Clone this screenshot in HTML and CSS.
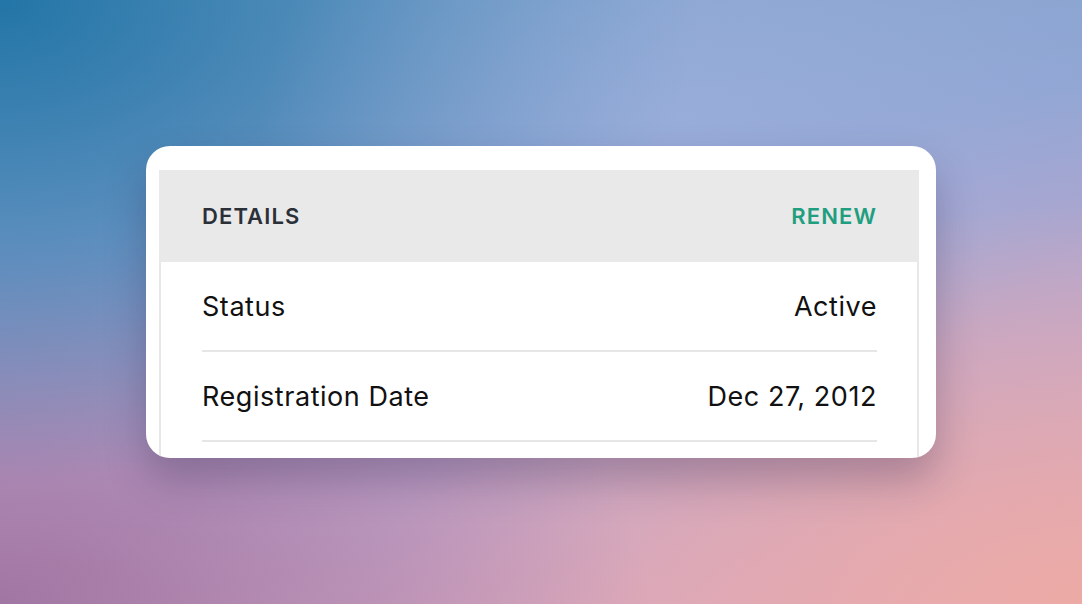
FILE: index.html
```html
<!DOCTYPE html>
<html>
<head>
<meta charset="utf-8">
<link rel="stylesheet" href="styles.css">
</head>
<body>
<div class="stage">
  <div class="card">
    <div class="panel">
      <div class="head">
        <span class="title">DETAILS</span>
        <span class="action">RENEW</span>
      </div>
      <div class="body">
        <div class="row"><span>Status</span><span>Active</span></div>
        <div class="row"><span>Registration Date</span><span>Dec 27, 2012</span></div>
        <div class="row row-empty"></div>
      </div>
    </div>
  </div>
</div>
</body>
</html>
```
FILE: styles.css
```css
html, body { margin: 0; padding: 0; }
body {
  width: 1082px; height: 604px; overflow: hidden;
  font-family: Inter, "Noto Sans", sans-serif;
}
.stage {
  width: 1082px; height: 604px;
  display: flex; align-items: center; justify-content: center;
  background:
    radial-gradient(ellipse 420px 300px at 680px 120px, rgba(160,178,222,0.55), rgba(160,178,222,0) 100%),
    radial-gradient(ellipse 700px 480px at 0px 0px, rgba(30,115,165,0.95), rgba(30,115,165,0) 100%),
    radial-gradient(ellipse 650px 380px at 0px 604px, rgba(160,115,160,0.95), rgba(160,115,160,0) 100%),
    radial-gradient(ellipse 700px 400px at 1082px 604px, rgba(236,170,165,1), rgba(236,170,165,0) 100%),
    linear-gradient(170deg, #7ea4cc 0%, #92a6d4 35%, #bda6cc 65%, #dca8bf 100%);
}
.card {
  width: 790px; height: 312px; box-sizing: border-box;
  background: #fff; border-radius: 24px;
  padding: 24px 17px 0 13px;
  overflow: hidden;
  box-shadow: 0 22px 40px rgba(40,30,70,0.28);
}
.panel {
  border-left: 2px solid #e8e8e8; border-right: 2px solid #e8e8e8;
}
.head {
  background: #e9e9e9; height: 92px; margin: 0 -2px;
  display: flex; align-items: center; justify-content: space-between;
  padding: 0 42px 0 43px;
  font-weight: 600; font-size: 22px; letter-spacing: 1.1px;
}
.title { color: #2b3038; }
.action { color: #1f9e80; }
.body { padding: 0 40px 0 41px; }
.row {
  height: 88px; border-bottom: 2px solid #e6e6e6;
  display: flex; align-items: center; justify-content: space-between;
  font-size: 27px; color: #111; letter-spacing: 0.55px;
}
```
